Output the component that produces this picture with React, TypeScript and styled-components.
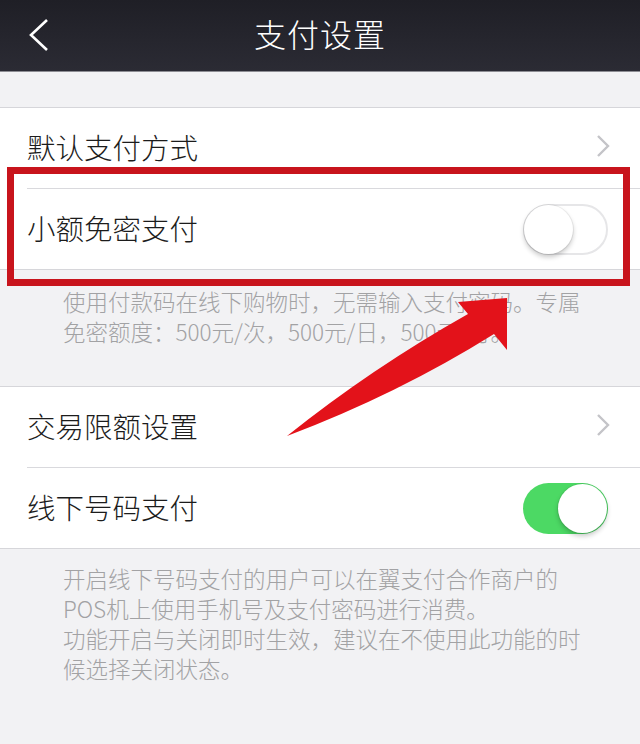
import styled, { createGlobalStyle } from 'styled-components';

const GlobalStyle = createGlobalStyle`
  html, body {
    margin: 0;
    padding: 0;
    background: #f2f2f4;
  }
  body {
    font-family: 'Noto Sans CJK SC', 'Noto Sans', sans-serif;
  }
`;

const Page = styled.div`
  position: relative;
  width: 640px;
  height: 744px;
  overflow: hidden;
  background: #f2f2f4;
`;

const NavBar = styled.header`
  height: 72px;
  padding-bottom: 5px;
  display: flex;
  align-items: center;
  justify-content: center;
  position: relative;
  background: linear-gradient(180deg, #1f1f26 0%, #2b2b34 100%);
  border-bottom: 1px solid #8d8d93;
  box-sizing: border-box;
`;

const BackButton = styled.button`
  position: absolute;
  left: 22px;
  top: 14px;
  width: 34px;
  height: 42px;
  padding: 0;
  border: none;
  background: none;
  display: flex;
  align-items: center;
  justify-content: center;
`;

const Title = styled.h1`
  margin: 0;
  color: #ffffff;
  font-size: 32px;
  font-weight: 300;
  letter-spacing: 1px;
`;

const TopGap = styled.div`
  height: 35px;
`;

const Group = styled.section`
  background: #ffffff;
  border-top: 1px solid #d6d6da;
  border-bottom: 1px solid #d6d6da;
`;

const Row = styled.div<{ $last?: boolean }>`
  height: 76px;
  padding-bottom: 4px;
  display: flex;
  align-items: center;
  justify-content: space-between;
  margin-left: 27px;
  padding-right: 28px;
  border-bottom: ${(p) => (p.$last ? 'none' : '1px solid #d9d9dd')};
`;

const Label = styled.span`
  font-size: 28.5px;
  font-weight: 300;
  color: #1c1c1c;
`;

const SwitchSlot = styled.div`
  padding-top: 4px;
  margin-right: 4px;
`;

const Switch = styled.div<{ $on?: boolean }>`
  position: relative;
  width: 85px;
  height: 51px;
  box-sizing: border-box;
  border-radius: 26px;
  background: ${(p) => (p.$on ? '#4cd964' : '#ffffff')};
  border: ${(p) => (p.$on ? 'none' : '2px solid #e6e6e8')};
`;

const Knob = styled.div<{ $on?: boolean }>`
  position: absolute;
  top: ${(p) => (p.$on ? '1px' : '-1px')};
  left: ${(p) => (p.$on ? '35px' : '-1px')};
  width: 49px;
  height: 49px;
  border-radius: 50%;
  background: #ffffff;
  box-shadow: 0 3px 5px rgba(0, 0, 0, 0.22), 0 0 0 1px rgba(0, 0, 0, 0.06);
`;

const Footnote = styled.p<{ $top: number; $bottom: number }>`
  margin: 0;
  padding: ${(p) => p.$top}px 40px ${(p) => p.$bottom}px 63px;
  font-size: 22.5px;
  font-weight: 300;
  line-height: 30px;
  color: #a2a2a4;
  white-space: nowrap;
`;

const Highlight = styled.div`
  position: absolute;
  left: 7px;
  top: 167px;
  width: 623px;
  height: 119px;
  box-sizing: border-box;
  border: 7px solid #c8141c;
  pointer-events: none;
`;

const ArrowLayer = styled.svg`
  position: absolute;
  left: 0;
  top: 0;
  pointer-events: none;
`;

function Chevron() {
  return (
    <svg width="18" height="26" viewBox="0 0 18 26">
      <path d="M4 3 L14 13 L4 23" fill="none" stroke="#c4c4c8" strokeWidth="2.4" />
    </svg>
  );
}

function App() {
  return (
    <Page>
      <GlobalStyle />
      <NavBar>
        <BackButton aria-label="返回">
          <svg width="24" height="36" viewBox="0 0 24 36">
            <path d="M20 3 L4 18 L20 33" fill="none" stroke="#ffffff" strokeWidth="2.6" />
          </svg>
        </BackButton>
        <Title>支付设置</Title>
      </NavBar>
      <TopGap />

      <Group>
        <Row>
          <Label>默认支付方式</Label>
          <Chevron />
        </Row>
        <Row $last>
          <Label>小额免密支付</Label>
          <SwitchSlot>
            <Switch>
              <Knob />
            </Switch>
          </SwitchSlot>
        </Row>
      </Group>
      <Footnote $top={16} $bottom={40}>
        使用付款码在线下购物时，无需输入支付密码。专属
        <br />
        免密额度：500元/次，500元/日，500元/月。
      </Footnote>

      <Group>
        <Row>
          <Label>交易限额设置</Label>
          <Chevron />
        </Row>
        <Row $last>
          <Label>线下号码支付</Label>
          <SwitchSlot>
            <Switch $on>
              <Knob $on />
            </Switch>
          </SwitchSlot>
        </Row>
      </Group>
      <Footnote $top={14} $bottom={20}>
        开启线下号码支付的用户可以在翼支付合作商户的
        <br />
        POS机上使用手机号及支付密码进行消费。
        <br />
        功能开启与关闭即时生效，建议在不使用此功能的时
        <br />
        候选择关闭状态。
      </Footnote>

      <Highlight />
      <ArrowLayer width="640" height="744" viewBox="0 0 640 744">
        <path
          d="M287 436 Q372 368 468 314 L458 302 L507 298 L507 350 L494 334 Q398 394 287 436 Z"
          fill="#e3121a"
        />
      </ArrowLayer>
    </Page>
  );
}

export default App;
